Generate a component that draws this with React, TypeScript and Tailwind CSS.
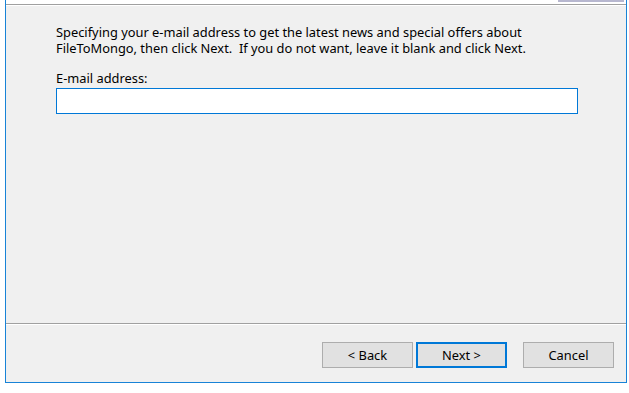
import React from 'react';

const FONT = { fontFamily: '"Noto Sans", "Open Sans", sans-serif' };

const WizardButton: React.FC<{ label: string; isDefault?: boolean }> = ({ label, isDefault }) => {
  return (
    <button
      className={
        isDefault
          ? 'w-[91px] h-[26px] bg-[#e1e1e1] border-2 border-[#0078d7] text-[12.85px] text-black leading-none'
          : 'w-[91px] h-[26px] bg-[#e1e1e1] border border-[#adadad] text-[12.85px] text-black leading-none'
      }
    >
      {label}
    </button>
  );
};

const App: React.FC = () => {
  return (
    <div className="w-[629px] h-[393px] bg-white pl-[5px]" style={FONT}>
      <div className="w-[622px] h-[383px] border-x border-b border-[#1883d7] flex flex-col">
        {/* header strip with the bottom of a button peeking in */}
        <div className="h-[4px] bg-white flex justify-end pr-[2px]">
          <div className="w-[66px] h-[2px] bg-[#b7b7cf]" />
        </div>
        <div className="h-px bg-[#a0a0a0]" />
        <div className="h-px bg-white" />

        {/* body */}
        <div className="flex-1 bg-[#f0f0f0] pl-[50px] pt-[18px]">
          <div className="flex flex-col text-[12.85px] leading-[16px] text-black">
            <span>Specifying your e-mail address to get the latest news and special offers about</span>
            <span>FileToMongo, then click Next.&nbsp; If you do not want, leave it blank and click Next.</span>
          </div>
          <label className="block mt-[14px] text-[12.85px] leading-[16px] text-black">E-mail address:</label>
          <input
            type="text"
            className="block mt-[2px] w-[522px] h-[26px] bg-white border border-[#0078d7] outline-none px-1 text-[12.85px]"
          />
        </div>

        <div className="h-px bg-[#a0a0a0]" />
        <div className="h-px bg-white" />

        {/* footer buttons */}
        <div className="h-[57px] bg-[#f0f0f0] flex items-start justify-end pt-[17px] pr-[12px]">
          <div className="flex gap-[3px]">
            <WizardButton label="< Back" />
            <WizardButton label="Next >" isDefault />
          </div>
          <div className="ml-[16px]">
            <WizardButton label="Cancel" />
          </div>
        </div>
      </div>
    </div>
  );
};

export default App;
